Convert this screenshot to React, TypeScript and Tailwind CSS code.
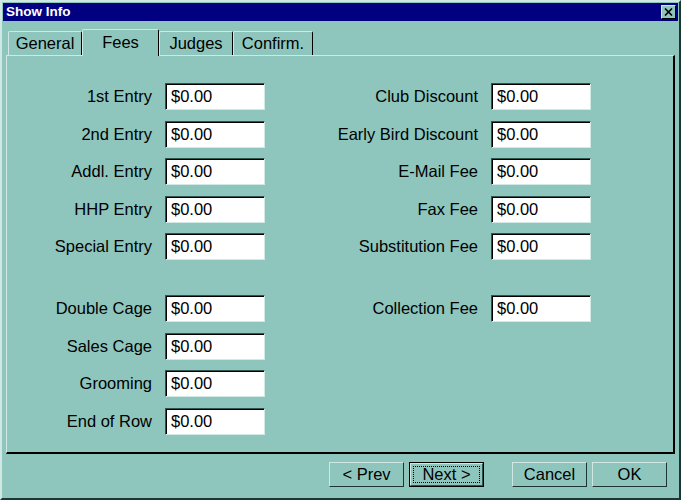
import React from "react";

// Show Info dialog, Fees tab

const leftFees = [
  ["1st Entry", "$0.00"],
  ["2nd Entry", "$0.00"],
  ["Addl. Entry", "$0.00"],
  ["HHP Entry", "$0.00"],
  ["Special Entry", "$0.00"],
];
const leftCages = [
  ["Double Cage", "$0.00"],
  ["Sales Cage", "$0.00"],
  ["Grooming", "$0.00"],
  ["End of Row", "$0.00"],
];
const rightFees = [
  ["Club Discount", "$0.00"],
  ["Early Bird Discount", "$0.00"],
  ["E-Mail Fee", "$0.00"],
  ["Fax Fee", "$0.00"],
  ["Substitution Fee", "$0.00"],
];
const rightExtra = [["Collection Fee", "$0.00"]];

function FeeRow({ label, value }: { label: string; value: string }) {
  return (
    <div className="flex h-[27px] items-center justify-end gap-[13px]">
      <span className="whitespace-nowrap">{label}</span>
      <div className="flex h-[27px] w-[100px] items-center border border-t-[#2f5550] border-l-[#2f5550] border-b-[#d2eae6] border-r-[#d2eae6] bg-white pl-[5px] shadow-[inset_1px_1px_0_#000]">
        {value}
      </div>
    </div>
  );
}

function Tab({ label, width, active }: { label: string; width: string; active?: boolean }) {
  return (
    <div
      className={
        "flex items-center justify-center rounded-t-[2px] border-l border-t border-r border-l-[#cfe8e3] border-t-[#cfe8e3] border-r-[#000] bg-[#8ec6bd] " +
        width +
        (active ? " h-[27px] pb-[2px]" : " mb-px h-[24px]")
      }
    >
      {label}
    </div>
  );
}

function Btn({ label, primary }: { label: string; primary?: boolean }) {
  if (primary) {
    return (
      <div className="h-[25px] w-[75px] border border-black">
        <div className="flex h-full w-full items-center justify-center border border-t-[#cfe8e3] border-l-[#cfe8e3] border-b-[#2f5550] border-r-[#2f5550] p-[2px]">
          <span className="flex h-full w-full items-center justify-center border border-dotted border-black">{label}</span>
        </div>
      </div>
    );
  }
  return (
    <div className="flex h-[25px] w-[75px] items-center justify-center border border-t-[#cfe8e3] border-l-[#cfe8e3] border-b-[#1c3733] border-r-[#1c3733]">
      {label}
    </div>
  );
}

export default function App() {
  return (
    <div className="flex h-[500px] w-[681px] flex-col border-2 border-t-[#cfe8e3] border-l-[#cfe8e3] border-b-[#1c3733] border-r-[#1c3733] bg-[#8ec6bd] p-px font-['Liberation_Sans',Arial,sans-serif] text-[16.5px] text-black">
      <div className="flex h-[18px] items-center justify-between bg-[#000080] pl-[3px] pr-[2px]">
        <span className="text-[13.5px] font-bold text-white">Show Info</span>
        <div className="flex h-[14px] w-[15px] items-center justify-center border border-t-[#cfe8e3] border-l-[#cfe8e3] border-b-black border-r-black bg-[#8ec6bd]">
          <svg width="9" height="8" viewBox="0 0 9 8">
            <path d="M1 0.5 L8 7.5 M8 0.5 L1 7.5" stroke="#000" strokeWidth="1.6" />
          </svg>
        </div>
      </div>

      <div className="relative z-10 ml-[5px] mt-[8px] -mb-px flex h-[27px] items-end">
        <Tab label="General" width="w-[74px]" />
        <Tab label="Fees" width="w-[77px]" active />
        <Tab label="Judges" width="w-[74px]" />
        <Tab label="Confirm." width="w-[80px]" />
      </div>

      <div className="ml-[3px] h-[399px] w-[669px] border-l border-t border-b-2 border-r-2 border-l-[#cfe8e3] border-t-[#cfe8e3] border-b-black border-r-black pt-[27px]">
        <div className="flex">
          <div className="flex w-[258px] flex-col gap-[10.5px]">
            {leftFees.map(([l, v]) => (
              <FeeRow key={l} label={l} value={v} />
            ))}
            <div className="h-[14px]" />
            {leftCages.map(([l, v]) => (
              <FeeRow key={l} label={l} value={v} />
            ))}
          </div>
          <div className="flex w-[326px] flex-col gap-[10.5px]">
            {rightFees.map(([l, v]) => (
              <FeeRow key={l} label={l} value={v} />
            ))}
            <div className="h-[14px]" />
            {rightExtra.map(([l, v]) => (
              <FeeRow key={l} label={l} value={v} />
            ))}
          </div>
        </div>
      </div>

      <div className="mt-[8px] flex justify-end pr-[11px]">
        <div className="flex gap-[5px]">
          <Btn label="< Prev" />
          <Btn label="Next >" primary />
        </div>
        <div className="ml-[28px] flex gap-[5px]">
          <Btn label="Cancel" />
          <Btn label="OK" />
        </div>
      </div>
    </div>
  );
}
